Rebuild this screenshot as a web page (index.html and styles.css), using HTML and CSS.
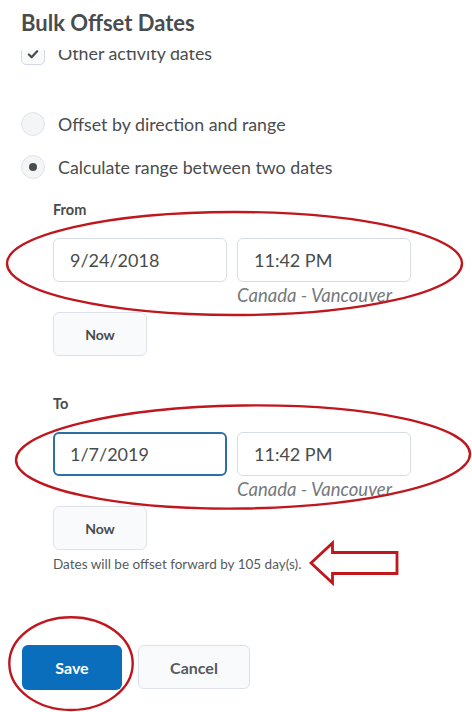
FILE: index.html
```html
<!DOCTYPE html>
<html lang="en">
<head>
<meta charset="utf-8">
<title>Bulk Offset Dates</title>
<link rel="stylesheet" href="styles.css">
</head>
<body>
<div class="dialog">
  <header class="title-bar"><h1 class="title">Bulk Offset Dates</h1></header>
  <div class="scroll">
    <div class="scroll-inner">
      <div class="option option-check">
        <span class="checkbox">
          <svg viewBox="0 0 24 24" width="24" height="24"><path d="M7.5 12.5 L10.5 15.5 L16.5 9" fill="none" stroke="#494c4e" stroke-width="2.4" stroke-linecap="round" stroke-linejoin="round"/></svg>
        </span>
        <span class="option-text">Other activity dates</span>
      </div>
      <div class="option option-radio1">
        <span class="radio"></span>
        <span class="option-text">Offset by direction and range</span>
      </div>
      <div class="option option-radio2">
        <span class="radio radio-on"><span class="dot"></span></span>
        <span class="option-text">Calculate range between two dates</span>
      </div>

      <section class="range">
        <div class="label">From</div>
        <div class="fields">
          <div class="field"><div class="input">9/24/2018</div></div>
          <div class="field">
            <div class="input">11:42 PM</div>
            <div class="tz">Canada - Vancouver</div>
          </div>
        </div>
        <button class="btn btn-now">Now</button>
      </section>

      <section class="range range-to">
        <div class="label">To</div>
        <div class="fields">
          <div class="field"><div class="input input-focus">1/7/2019</div></div>
          <div class="field">
            <div class="input">11:42 PM</div>
            <div class="tz">Canada - Vancouver</div>
          </div>
        </div>
        <button class="btn btn-now">Now</button>
        <p class="note">Dates will be offset forward by 105 day(s).</p>
      </section>

      <div class="actions">
        <button class="btn btn-primary">Save</button>
        <button class="btn btn-cancel">Cancel</button>
      </div>
    </div>
  </div>
</div>
<svg class="marks" width="472" height="712" viewBox="0 0 472 712">
  <ellipse cx="234.5" cy="263.5" rx="227.5" ry="51.5" fill="none" stroke="#c0161e" stroke-width="2.4"/>
  <ellipse cx="243" cy="457" rx="227" ry="51.5" transform="rotate(-0.8 243 457)" fill="none" stroke="#c0161e" stroke-width="2.4"/>
  <ellipse cx="71" cy="663.6" rx="61.7" ry="46.4" fill="none" stroke="#c0161e" stroke-width="2.4"/>
  <polygon points="311,563 332.5,543 332.5,552.5 397,552.5 397,573.5 332.5,573.5 332.5,583" fill="none" stroke="#c0161e" stroke-width="2.8" stroke-linejoin="miter"/>
</svg>
</body>
</html>
```
FILE: styles.css
```css
* { box-sizing: border-box; }
html, body { margin: 0; padding: 0; background: #fff; }
body {
  position: relative;
  width: 472px;
  height: 712px;
  overflow: hidden;
  font-family: Lato, "Liberation Sans", sans-serif;
  color: #494c4e;
}
.dialog { display: flex; flex-direction: column; height: 712px; }
.title-bar {
  height: 50px;
  flex: none;
  padding: 10px 0 0 21px;
  background: #fff;
}
.title {
  margin: 0;
  font-size: 22px;
  line-height: 26px;
  font-weight: 700;
  color: #494c4e;
}
.scroll { flex: 1; overflow: hidden; }
.scroll-inner { margin-top: -9px; display: flex; flex-direction: column; }

.option {
  display: flex;
  align-items: center;
  gap: 13px;
  height: 24px;
  padding-left: 21px;
  font-size: 17.8px;
}
.option-text { line-height: 24px; }
.option-radio1 { margin-top: 47px; }
.option-radio2 { margin-top: 19px; }

.checkbox {
  width: 24px; height: 24px;
  flex: none;
  border: 1px solid #d3d9e3;
  border-radius: 5px;
  background: #f9fafb;
  display: flex;
}
.radio {
  width: 24px; height: 24px;
  flex: none;
  border-radius: 50%;
  border: 1px solid #dfe3e9;
  background: #f3f5f7;
  display: flex;
  align-items: center;
  justify-content: center;
}
.dot { width: 8px; height: 8px; border-radius: 50%; background: #494c4e; }

.range { padding-left: 53px; margin-top: 21px; display: flex; flex-direction: column; align-items: flex-start; }
.range-to { margin-top: 38px; }
.label { font-size: 14.5px; line-height: 20px; font-weight: 700; }
.fields { display: flex; gap: 10px; margin-top: 18px; }
.field { width: 174px; display: flex; flex-direction: column; }
.input {
  height: 44px;
  border: 1px solid #d8dde5;
  border-radius: 6px;
  padding-left: 16px;
  font-size: 18px;
  line-height: 42px;
  color: #494c4e;
  background: #fff;
}
.input-focus { border: 2px solid #2b6fa6; line-height: 40px; padding-left: 15px; }
.tz {
  margin-top: 3px;
  font-size: 18.5px;
  line-height: 20px;
  font-style: italic;
  color: #75797c;
  white-space: nowrap;
}
.btn {
  font-family: Lato, "Liberation Sans", sans-serif;
  font-weight: 700;
  border-radius: 6px;
  cursor: pointer;
}
.btn-now {
  margin-top: 7px;
  width: 94px;
  height: 44px;
  border: 1px solid #dde1e7;
  background: #f9fafb;
  font-size: 14px;
  color: #494c4e;
}
.note { margin: 6px 0 0; font-size: 13.5px; line-height: 16px; color: #565a5c; }

.actions { display: flex; gap: 16px; padding-left: 22px; margin-top: 73px; }
.btn-primary {
  width: 100px; height: 45px;
  border: none;
  background: #0a6ebd;
  color: #fff;
  font-size: 16px;
}
.btn-cancel {
  width: 112px; height: 44px;
  border: 1px solid #dde1e7;
  background: #f9fafb;
  color: #565a5c;
  font-size: 16px;
}
.marks { position: absolute; left: 0; top: 0; pointer-events: none; }
```
